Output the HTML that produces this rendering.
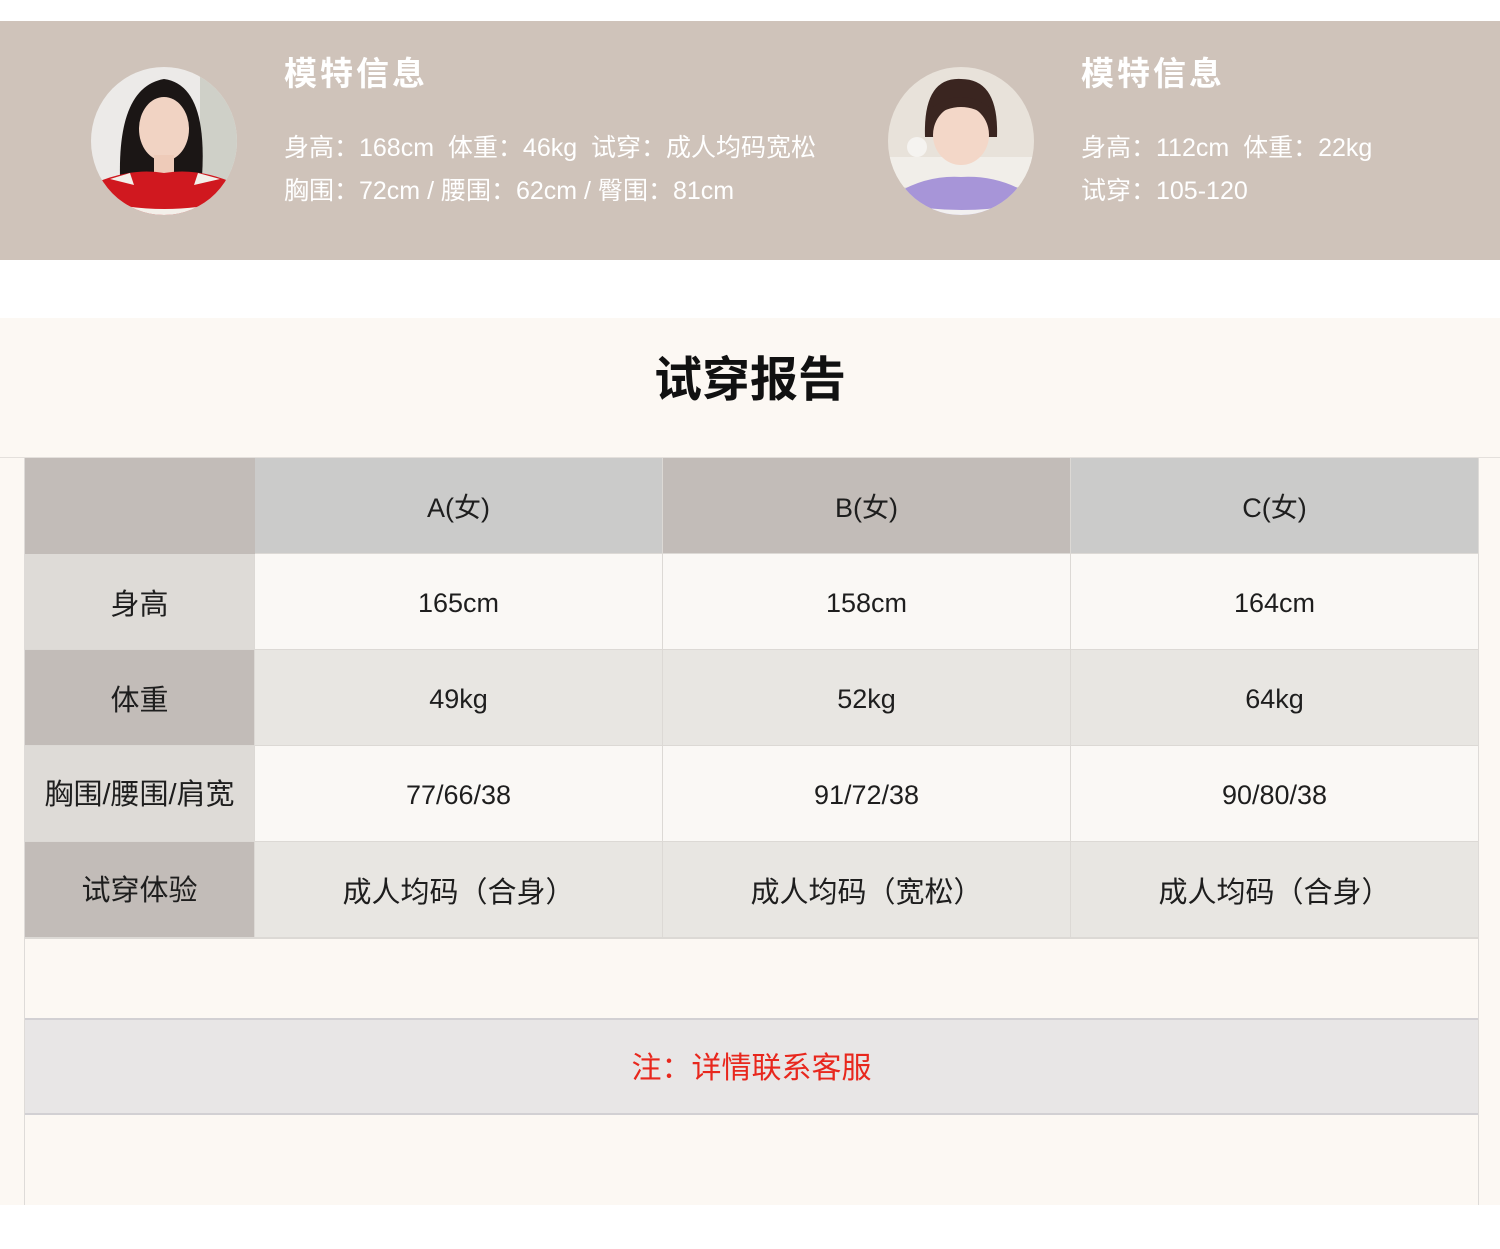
<!DOCTYPE html>
<html><head><meta charset="utf-8"><style>
*{margin:0;padding:0;box-sizing:border-box}
body{width:1500px;height:1249px;background:#fff;position:relative;overflow:hidden;font-family:"Liberation Sans","Noto Sans CJK SC",sans-serif;color:#1e1e1e}
.a{position:absolute}
.band{left:0;top:21px;width:1500px;height:239px;background:#cfc3ba}
.h{color:#fff;font-size:33px;font-weight:bold;letter-spacing:3px}
.t{color:#fff;font-size:25px;line-height:43px}
.cream{left:0;top:318px;width:1500px;height:887px;background:#fcf8f3}
.c{position:absolute;display:flex;align-items:center;justify-content:center;font-size:27px;border-right:1px solid #dcd9d5;border-bottom:1px solid #dcd9d5;padding-top:3px}
.lab{font-size:29px;padding-top:0}
</style></head><body>
<div class="a band"></div>
<svg class="a" style="left:90px;top:67px" width="148" height="148" viewBox="0 0 148 148">
<defs><clipPath id="c1"><ellipse cx="74" cy="74" rx="73" ry="74"/></clipPath></defs>
<g clip-path="url(#c1)"><rect width="148" height="148" fill="#eceae8"/><rect x="110" width="40" height="148" fill="#cfd0c8"/>
<path d="M30 110 Q28 20 74 12 Q118 18 112 110 Z" fill="#1b1615"/>
<ellipse cx="74" cy="62" rx="25" ry="32" fill="#f1d3c3"/>
<rect x="64" y="88" width="20" height="20" fill="#eecbb9"/>
<path d="M0 148 L0 118 Q40 100 74 106 Q110 100 148 118 L148 148Z" fill="#d0181f"/>
<path d="M10 134 Q74 150 140 134 L140 142 Q74 158 10 142Z" fill="#f3f0ea"/>
<path d="M20 112 L40 106 L44 118Z M108 106 L130 112 L104 118Z" fill="#f3f0ea"/></g></svg>
<div class="a h" style="left:284px;top:47px">模特信息</div>
<div class="a t" style="left:284px;top:127px">身高：168cm&nbsp; 体重：46kg&nbsp; 试穿：成人均码宽松<br>胸围：72cm / 腰围：62cm / 臀围：81cm</div>
<svg class="a" style="left:887px;top:67px" width="148" height="148" viewBox="0 0 148 148">
<defs><clipPath id="c2"><ellipse cx="74" cy="74" rx="73" ry="74"/></clipPath></defs>
<g clip-path="url(#c2)"><rect width="148" height="148" fill="#e8e2da"/><rect x="0" y="90" width="148" height="30" fill="#f1eee9"/>
<circle cx="30" cy="80" r="10" fill="#f5f3f0"/>
<path d="M38 70 Q36 10 74 12 Q112 12 110 70 Z" fill="#3a2520"/>
<ellipse cx="74" cy="68" rx="28" ry="30" fill="#f3d7c8"/>
<path d="M46 50 Q74 30 102 50 L102 40 Q74 20 46 40Z" fill="#3a2520"/>
<path d="M0 148 L10 126 Q40 108 74 110 Q110 108 140 126 L148 148Z" fill="#a795d8"/>
<path d="M10 136 Q74 150 140 136 L140 148 L10 148Z" fill="#f2f0f0"/></g></svg>
<div class="a h" style="left:1081px;top:47px">模特信息</div>
<div class="a t" style="left:1081px;top:127px">身高：112cm&nbsp; 体重：22kg<br>试穿：105-120</div>
<div class="a cream"></div>
<div class="a" style="left:0;top:340px;width:1500px;text-align:center;font-size:48px;font-weight:bold;color:#111">试穿报告</div>
<div class="a" style="left:0;top:457px;width:1500px;height:1px;background:#e4e0dc"></div>
<div class="a" style="left:24px;top:458px;width:1455px;height:747px;border-left:1px solid #dedbd8;border-right:1px solid #dedbd8"></div>
<div class="a" style="left:25px;top:1018px;width:1453px;height:97px;background:#e8e6e6;border-top:2px solid #d2d0d3;border-bottom:2px solid #d2d0d3;display:flex;align-items:center;justify-content:center;color:#e8271d;font-size:30px;padding-bottom:4px">注：详情联系客服</div>
<div class="a" style="left:25px;top:937px;width:1453px;height:2px;background:#dcd9d5"></div>

<div class="c" style="left:25px;top:458px;width:230px;height:96px;background:#c2bcb8;border-color:#c2bcb8"></div>
<div class="c" style="left:255px;top:458px;width:408px;height:96px;background:#cbcbca;padding-top:0">A(女)</div>
<div class="c" style="left:663px;top:458px;width:408px;height:96px;background:#c2bcb8;padding-top:0">B(女)</div>
<div class="c" style="left:1071px;top:458px;width:407px;height:96px;background:#cbcbca;border-right:0;padding-top:0">C(女)</div>

<div class="c lab" style="left:25px;top:554px;width:230px;height:96px;background:#dedbd7">身高</div>
<div class="c" style="left:255px;top:554px;width:408px;height:96px;background:#faf8f5">165cm</div>
<div class="c" style="left:663px;top:554px;width:408px;height:96px;background:#faf8f5">158cm</div>
<div class="c" style="left:1071px;top:554px;width:407px;height:96px;background:#faf8f5;border-right:0">164cm</div>

<div class="c lab" style="left:25px;top:650px;width:230px;height:96px;background:#c2bcb8">体重</div>
<div class="c" style="left:255px;top:650px;width:408px;height:96px;background:#e8e6e2">49kg</div>
<div class="c" style="left:663px;top:650px;width:408px;height:96px;background:#e8e6e2">52kg</div>
<div class="c" style="left:1071px;top:650px;width:407px;height:96px;background:#e8e6e2;border-right:0">64kg</div>

<div class="c lab" style="left:25px;top:746px;width:230px;height:96px;background:#dedbd7;padding-bottom:3px">胸围/腰围/肩宽</div>
<div class="c" style="left:255px;top:746px;width:408px;height:96px;background:#faf8f5">77/66/38</div>
<div class="c" style="left:663px;top:746px;width:408px;height:96px;background:#faf8f5">91/72/38</div>
<div class="c" style="left:1071px;top:746px;width:407px;height:96px;background:#faf8f5;border-right:0">90/80/38</div>

<div class="c lab" style="left:25px;top:842px;width:230px;height:96px;background:#c2bcb8;padding-bottom:3px">试穿体验</div>
<div class="c lab" style="left:255px;top:842px;width:408px;height:96px;background:#e8e6e2">成人均码（合身）</div>
<div class="c lab" style="left:663px;top:842px;width:408px;height:96px;background:#e8e6e2">成人均码（宽松）</div>
<div class="c lab" style="left:1071px;top:842px;width:407px;height:96px;background:#e8e6e2;border-right:0">成人均码（合身）</div>
</body></html>
